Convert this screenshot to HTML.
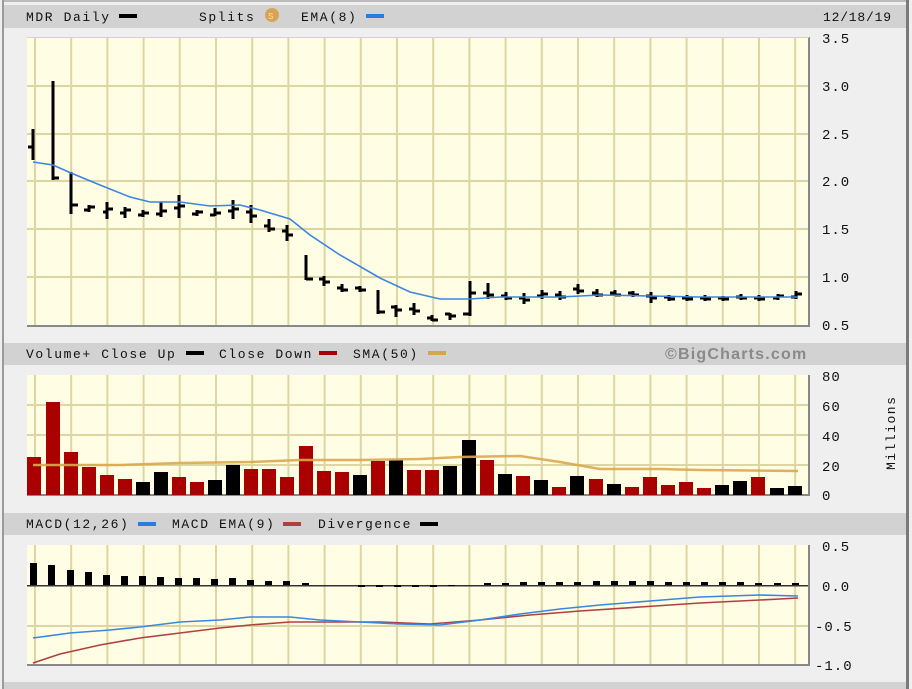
<!DOCTYPE html>
<html><head><meta charset="utf-8"><style>
html,body{margin:0;padding:0;background:#efefef;width:912px;height:689px;overflow:hidden}
svg{display:block}
text{font-family:"Liberation Mono","DejaVu Sans Mono",monospace;font-size:13px;fill:#111;letter-spacing:1.6px}
.ax text{letter-spacing:1px;font-size:14px}
</style></head><body>
<svg width="912" height="689" viewBox="0 0 912 689">
<defs>
<pattern id="vg" x="34" y="0" width="36.2" height="689" patternUnits="userSpaceOnUse">
<rect x="0" y="0" width="2" height="689" fill="#ddd6a2"/></pattern>
</defs>
<rect x="0" y="0" width="912" height="689" fill="#efefef"/>
<rect x="2" y="0" width="2" height="689" fill="#9a9a9a"/>
<rect x="906" y="0" width="3" height="689" fill="#7a7a7a"/>
<rect x="4" y="0" width="902" height="2" fill="#bbb"/>
<rect x="4" y="5" width="902" height="23" fill="#d2d2d2"/>
<text x="26" y="21">MDR Daily</text><rect x="119" y="14" width="18" height="4" fill="#000"/>
<text x="199" y="21">Splits</text><circle cx="272" cy="15" r="7" fill="#d9a452"/><text x="268" y="19" style="font-size:9px;fill:#f6e0b0;letter-spacing:0">S</text>
<text x="301" y="21">EMA(8)</text><rect x="366" y="14" width="18" height="4" fill="#2b7be0"/>
<text x="823" y="21" style="letter-spacing:0.8px">12/18/19</text>

<rect x="4" y="343" width="902" height="22" fill="#d2d2d2"/>
<text x="26" y="358">Volume+ Close Up</text><rect x="186" y="351" width="18" height="4" fill="#000"/>
<text x="219" y="358">Close Down</text><rect x="319" y="351" width="18" height="4" fill="#a00"/>
<text x="353" y="358">SMA(50)</text><rect x="428" y="351" width="18" height="4" fill="#d9a452"/>
<text x="665" y="359" style="font-family:'Liberation Sans',sans-serif;font-weight:bold;font-size:16px;fill:#8a8a8a;letter-spacing:1.2px">©BigCharts.com</text>

<rect x="4" y="513" width="902" height="22" fill="#d2d2d2"/>
<text x="26" y="528">MACD(12,26)</text><rect x="138" y="522" width="18" height="4" fill="#2b7be0"/>
<text x="172" y="528">MACD EMA(9)</text><rect x="283" y="522" width="18" height="4" fill="#b04040"/>
<text x="318" y="528">Divergence</text><rect x="420" y="522" width="18" height="4" fill="#000"/>

<rect x="4" y="682" width="902" height="7" fill="#d2d2d2"/>

<rect x="27" y="37" width="782" height="289" fill="#fffde3"/>
<rect x="27" y="37" width="782" height="289" fill="url(#vg)"/>
<g fill="#ddd6a2"><rect x="27" y="85" width="782" height="2"/><rect x="27" y="133" width="782" height="2"/><rect x="27" y="180" width="782" height="2"/><rect x="27" y="228" width="782" height="2"/><rect x="27" y="276" width="782" height="2"/></g>
<rect x="27" y="325" width="782" height="2" fill="#888"/><rect x="808" y="37" width="2" height="290" fill="#888"/><rect x="27" y="37" width="782" height="1" fill="#ddd6a2"/>
<g class="ax"><text x="822" y="43">3.5</text><text x="822" y="91">3.0</text><text x="822" y="139">2.5</text><text x="822" y="186">2.0</text><text x="822" y="234">1.5</text><text x="822" y="282">1.0</text><text x="822" y="330">0.5</text></g>
<g stroke="#000" stroke-width="3" fill="none">
<path d="M33 129V160M28 147h5"/>
<path d="M53 81V180M53 178h6"/>
<path d="M71 172V214M71 205h7"/>
<path d="M89 205V212M84 210h5M89 207h6"/>
<path d="M107 202V219M103 212h4M107 209h6"/>
<path d="M125 207V218M120 213h5M125 210h6"/>
<path d="M143 210V217M138 215h5M143 213h6"/>
<path d="M161 202V217M156 214h5M161 211h6"/>
<path d="M179 195V218M174 208h5M179 206h6"/>
<path d="M197 210V216M192 214h5M197 212h6"/>
<path d="M215 208V216M210 215h5M215 213h6"/>
<path d="M233 200V219M228 211h5M233 209h6"/>
<path d="M251 205V223M246 212h5M251 216h6"/>
<path d="M269 219V232M264 226h5M269 229h6"/>
<path d="M287 225V241M282 231h5M287 235h6"/>
<path d="M306 255V280M306 279h7"/>
<path d="M324 276V286M319 279h5M324 282h6"/>
<path d="M342 284V292M337 288h5M342 290h6"/>
<path d="M360 286V292M355 288h5M360 290h6"/>
<path d="M378 290V314M378 312h7"/>
<path d="M396 305V317M391 307h5M396 310h6"/>
<path d="M414 303V315M409 309h5M414 311h6"/>
<path d="M432 315V321M427 318h5M432 320h6"/>
<path d="M450 313V320M445 314h5M450 316h6"/>
<path d="M470 281V316M463 314h7M470 293h6"/>
<path d="M488 283V299M483 293h5M488 295h6"/>
<path d="M506 292V300M501 296h5M506 298h6"/>
<path d="M524 293V304M519 298h5M524 300h6"/>
<path d="M542 290V299M537 296h5M542 294h6"/>
<path d="M560 291V300M555 295h5M560 297h6"/>
<path d="M578 284V294M573 289h5M578 291h6"/>
<path d="M597 289V297M592 293h5M597 295h6"/>
<path d="M615 290V296M610 293h5M615 295h6"/>
<path d="M633 291V297M628 293h5M633 295h6"/>
<path d="M651 292V303M646 296h5M651 298h6"/>
<path d="M669 295V301M664 297h5M669 299h6"/>
<path d="M687 295V301M682 298h5M687 299h6"/>
<path d="M705 295V301M700 298h5M705 299h6"/>
<path d="M723 296V301M718 298h5M723 299h6"/>
<path d="M741 294V300M736 297h5M741 298h6"/>
<path d="M759 295V301M754 298h5M759 299h6"/>
<path d="M778 294V300M773 298h5M778 296h6"/>
<path d="M796 291V299M791 297h5M796 294h6"/>
</g>
<polyline fill="none" stroke="#3a86e0" stroke-width="1.6" points="33,162 53,165 71,173 100,185 130,197 150,202 180,202 210,206 240,205 260,210 290,219 310,235 340,255 380,278 410,292 440,299 470,299 500,297 560,297 600,295 650,296 700,297 798,297"/>

<rect x="27" y="375" width="782" height="120" fill="#fffde3"/>
<rect x="27" y="375" width="782" height="120" fill="url(#vg)"/>
<g fill="#ddd6a2"><rect x="27" y="404" width="782" height="2"/><rect x="27" y="434" width="782" height="2"/><rect x="27" y="464" width="782" height="2"/></g>
<rect x="27" y="494" width="782" height="2" fill="#888"/><rect x="808" y="375" width="2" height="121" fill="#888"/>
<g class="ax"><text x="822" y="381">80</text><text x="822" y="411">60</text><text x="822" y="441">40</text><text x="822" y="471">20</text><text x="822" y="500">0</text></g>
<text transform="translate(895,470) rotate(-90)" style="font-size:13px;letter-spacing:1.5px">Millions</text>
<g>
<rect x="27" y="457" width="14" height="38" fill="#a00"/>
<rect x="46" y="402" width="14" height="93" fill="#a00"/>
<rect x="64" y="452" width="14" height="43" fill="#a00"/>
<rect x="82" y="467" width="14" height="28" fill="#a00"/>
<rect x="100" y="475" width="14" height="20" fill="#a00"/>
<rect x="118" y="479" width="14" height="16" fill="#a00"/>
<rect x="136" y="482" width="14" height="13" fill="#000"/>
<rect x="154" y="472" width="14" height="23" fill="#000"/>
<rect x="172" y="477" width="14" height="18" fill="#a00"/>
<rect x="190" y="482" width="14" height="13" fill="#a00"/>
<rect x="208" y="480" width="14" height="15" fill="#000"/>
<rect x="226" y="465" width="14" height="30" fill="#000"/>
<rect x="244" y="469" width="14" height="26" fill="#a00"/>
<rect x="262" y="469" width="14" height="26" fill="#a00"/>
<rect x="280" y="477" width="14" height="18" fill="#a00"/>
<rect x="299" y="446" width="14" height="49" fill="#a00"/>
<rect x="317" y="471" width="14" height="24" fill="#a00"/>
<rect x="335" y="472" width="14" height="23" fill="#a00"/>
<rect x="353" y="475" width="14" height="20" fill="#000"/>
<rect x="371" y="461" width="14" height="34" fill="#a00"/>
<rect x="389" y="460" width="14" height="35" fill="#000"/>
<rect x="407" y="470" width="14" height="25" fill="#a00"/>
<rect x="425" y="470" width="14" height="25" fill="#a00"/>
<rect x="443" y="466" width="14" height="29" fill="#000"/>
<rect x="462" y="440" width="14" height="55" fill="#000"/>
<rect x="480" y="460" width="14" height="35" fill="#a00"/>
<rect x="498" y="474" width="14" height="21" fill="#000"/>
<rect x="516" y="476" width="14" height="19" fill="#a00"/>
<rect x="534" y="480" width="14" height="15" fill="#000"/>
<rect x="552" y="487" width="14" height="8" fill="#a00"/>
<rect x="570" y="476" width="14" height="19" fill="#000"/>
<rect x="589" y="479" width="14" height="16" fill="#a00"/>
<rect x="607" y="484" width="14" height="11" fill="#000"/>
<rect x="625" y="487" width="14" height="8" fill="#a00"/>
<rect x="643" y="477" width="14" height="18" fill="#a00"/>
<rect x="661" y="485" width="14" height="10" fill="#a00"/>
<rect x="679" y="482" width="14" height="13" fill="#a00"/>
<rect x="697" y="488" width="14" height="7" fill="#a00"/>
<rect x="715" y="485" width="14" height="10" fill="#000"/>
<rect x="733" y="481" width="14" height="14" fill="#000"/>
<rect x="751" y="477" width="14" height="18" fill="#a00"/>
<rect x="770" y="488" width="14" height="7" fill="#000"/>
<rect x="788" y="486" width="14" height="9" fill="#000"/>
</g>
<polyline fill="none" stroke="#dba850" stroke-width="2.5" opacity="0.9" points="33,465 120,465 180,463 250,462 300,460 360,460 420,459 460,457 520,456 560,462 600,469 660,469 700,470 798,471"/>

<rect x="27" y="545" width="782" height="120" fill="#fffde3"/>
<rect x="27" y="545" width="782" height="120" fill="url(#vg)"/>
<g fill="#ddd6a2"><rect x="27" y="625" width="782" height="2"/></g>
<rect x="27" y="585" width="782" height="1.5" fill="#333"/>
<rect x="27" y="664" width="782" height="2" fill="#888"/><rect x="808" y="545" width="2" height="121" fill="#888"/>
<g class="ax"><text x="822" y="551">0.5</text><text x="822" y="591">0.0</text><text x="815" y="631">-0.5</text><text x="815" y="670">-1.0</text></g>
<g fill="#000">
<rect x="30" y="563" width="7" height="22"/><rect x="48" y="565" width="7" height="20"/><rect x="67" y="570" width="7" height="15"/><rect x="85" y="572" width="7" height="13"/><rect x="103" y="575" width="7" height="10"/><rect x="121" y="576" width="7" height="9"/><rect x="139" y="576" width="7" height="9"/><rect x="157" y="577" width="7" height="8"/><rect x="175" y="578" width="7" height="7"/><rect x="193" y="578" width="7" height="7"/><rect x="211" y="579" width="7" height="6"/><rect x="229" y="578" width="7" height="7"/><rect x="247" y="580" width="7" height="5"/><rect x="265" y="581" width="7" height="4"/><rect x="283" y="581" width="7" height="4"/><rect x="302" y="583" width="7" height="2"/>
<rect x="358" y="585" width="7" height="2"/><rect x="376" y="585" width="7" height="2"/><rect x="394" y="585" width="7" height="2"/><rect x="412" y="585" width="7" height="2"/><rect x="430" y="585" width="7" height="2"/><rect x="448" y="585" width="7" height="1"/>
<rect x="484" y="583" width="7" height="2"/><rect x="502" y="583" width="7" height="2"/><rect x="520" y="582" width="7" height="3"/><rect x="538" y="582" width="7" height="3"/><rect x="556" y="582" width="7" height="3"/><rect x="574" y="582" width="7" height="3"/><rect x="593" y="581" width="7" height="4"/><rect x="611" y="581" width="7" height="4"/><rect x="629" y="581" width="7" height="4"/><rect x="647" y="581" width="7" height="4"/><rect x="665" y="582" width="7" height="3"/><rect x="683" y="582" width="7" height="3"/><rect x="701" y="582" width="7" height="3"/><rect x="719" y="582" width="7" height="3"/><rect x="737" y="582" width="7" height="3"/><rect x="755" y="583" width="7" height="2"/><rect x="774" y="583" width="7" height="2"/><rect x="792" y="583" width="7" height="2"/>
</g>
<polyline fill="none" stroke="#b04040" stroke-width="1.6" points="33,663 60,654 100,645 140,638 180,633 220,628 250,625 290,622 330,622 380,622 430,624 480,620 530,615 580,611 640,607 700,603 760,600 798,598"/>
<polyline fill="none" stroke="#3a86e0" stroke-width="1.6" points="33,638 70,633 110,630 140,627 180,622 220,620 250,617 290,617 320,620 360,622 400,624 440,625 480,620 520,614 560,609 600,605 650,601 700,597 760,595 798,596"/>
</svg>
</body></html>
